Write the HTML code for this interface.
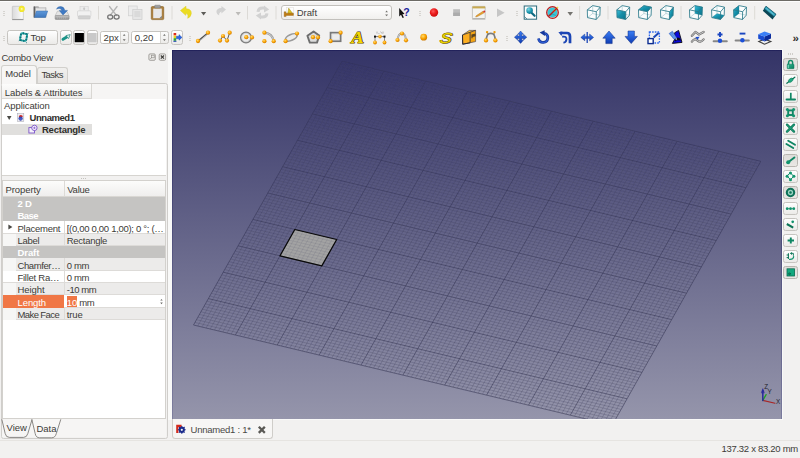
<!DOCTYPE html>
<html lang="en">
<head>
<meta charset="utf-8">
<title>FreeCAD</title>
<style>
html,body{margin:0;padding:0;}
body{width:800px;height:458px;overflow:hidden;background:#f2f1f0;position:relative;
 font-family:"Liberation Sans","DejaVu Sans",sans-serif;font-size:9.5px;letter-spacing:-0.08px;color:#3c3b37;line-height:1;}
.abs{position:absolute;}
.t{position:absolute;white-space:nowrap;line-height:12px;height:12px;}
.b{font-weight:bold;}
#topdark{left:0;top:0;width:800px;height:1px;background:#6d6b66;}
#topwhite{left:0;top:1px;width:800px;height:1.2px;background:#fdfdfd;}
.btn{position:absolute;box-sizing:border-box;border:1px solid #c6c4c0;border-radius:2.5px;
 background:linear-gradient(#fefefe,#ebeae8);}
.btn.on{background:linear-gradient(#dedcd9,#e9e7e4);border-color:#b9b6b1;}
.spin{position:absolute;box-sizing:border-box;border:1px solid #c6c4c0;border-radius:2.5px;background:linear-gradient(#fbfbfb,#ecebe9);}
.spin i{position:absolute;left:0;top:0;bottom:0;background:#fff;border-right:1px solid #d6d4d0;border-radius:2px 0 0 2px;}
.hdl{position:absolute;width:2px;height:1px;background:#d6d4d0;box-shadow:0 2px 0 #d6d4d0,0 4px 0 #d6d4d0;}
.sep{position:absolute;width:1px;background:#dad8d4;}
</style>
</head>
<body>
<div class="abs" id="topdark"></div><div class="abs" id="topwhite"></div>
<!-- toolbars -->
<div class="hdl" style="left:2.5px;top:10.5px"></div>
<div class="hdl" style="left:2.5px;top:35.5px"></div>
<div class="hdl" style="left:188.5px;top:35.5px"></div>
<div class="hdl" style="left:419px;top:10.5px"></div>
<div class="hdl" style="left:516px;top:10.5px"></div>
<div class="hdl" style="left:506.2px;top:35.5px"></div>
<!-- row 2 widgets -->
<div class="btn" style="left:7.3px;top:30.4px;width:50.6px;height:14.4px;"></div>
<div class="t" style="left:30.6px;top:31.5px;font-size:9.6px;">Top</div>
<div class="btn" style="left:60px;top:30.4px;width:11.8px;height:14.4px;"></div>
<div class="btn" style="left:73.4px;top:30.4px;width:11.6px;height:14.4px;"></div>
<div class="btn" style="left:86.6px;top:30.4px;width:11.4px;height:14.4px;"></div>
<div class="spin" style="left:100.4px;top:30.8px;width:29px;height:13.4px;"><i style="width:18.6px"></i></div>
<div class="t" style="left:103.4px;top:32px;font-size:9.6px;">2px</div>
<div class="spin" style="left:131px;top:30.8px;width:37.8px;height:13.4px;"><i style="width:28.4px"></i></div>
<div class="t" style="left:134.8px;top:32px;font-size:9.6px;">0,20</div>
<div class="btn" style="left:171px;top:30.4px;width:11.8px;height:14.4px;"></div>
<!-- workbench combo -->
<div class="abs" style="left:280.6px;top:5.4px;width:111.6px;height:14.4px;box-sizing:border-box;border:1px solid #c2c0bc;border-radius:3px;background:linear-gradient(#ffffff,#f1f0ee);"></div>
<svg class="abs" style="left:283px;top:6px" width="12" height="13" viewBox="283 6 12 13">
<rect x="286.6" y="7.4" width="6.8" height="9.6" fill="#fdfdfd" stroke="#dedcd8" stroke-width=".5"/>
<path d="M288.7 8.2L292.6 13.4H287.8Z" fill="#dcc424" stroke="#a08c14" stroke-width=".5" stroke-linejoin="round"/>
<path d="M284.2 11.8H285.8V13.2H293.4V15.4H285.8V16.6H284.2Z" fill="#c07c10" stroke="#8c580a" stroke-width=".4"/>
</svg>
<div class="t" style="left:296.8px;top:6.7px;font-size:9.5px;color:#3e3d3a;">Draft</div>
<svg class="abs" style="left:384px;top:9px" width="6" height="9" viewBox="384 9 6 9"><path d="M385.3 12.2L386.6 10.5L387.9 12.2ZM385.1 14.4L386.6 16.2L388.1 14.4Z" fill="#706f6b"/></svg>
<svg class="abs" style="left:0;top:0" width="800" height="50" viewBox="0 0 800 50">
<defs>
<linearGradient id="pg" x1="0" y1="0" x2="1" y2="0"><stop offset="0" stop-color="#dadada"/><stop offset="1" stop-color="#fdfdfd"/></linearGradient>
<radialGradient id="yel" cx=".5" cy=".5" r=".5"><stop offset="0" stop-color="#fffde0"/><stop offset=".45" stop-color="#f6ec38"/><stop offset="1" stop-color="#efe32a"/></radialGradient>
<linearGradient id="fold" x1="0" y1="0" x2="0" y2="1"><stop offset="0" stop-color="#5e98da"/><stop offset="1" stop-color="#3f78bf"/></linearGradient>
<linearGradient id="gr1" x1="0" y1="0" x2="0" y2="1"><stop offset="0" stop-color="#c8c8c8"/><stop offset="1" stop-color="#8e8e8e"/></linearGradient>
<radialGradient id="red" cx=".4" cy=".35" r=".7"><stop offset="0" stop-color="#ff5a5a"/><stop offset=".5" stop-color="#ea1c1c"/><stop offset="1" stop-color="#c80c0c"/></radialGradient>
<radialGradient id="tealb" cx=".35" cy=".3" r=".8"><stop offset="0" stop-color="#7ad8e6"/><stop offset=".6" stop-color="#1a94ac"/><stop offset="1" stop-color="#0a6c84"/></radialGradient>
<linearGradient id="tealf" x1="0" y1="0" x2="1" y2="1"><stop offset="0" stop-color="#3cbcd8"/><stop offset=".5" stop-color="#1490aa"/><stop offset="1" stop-color="#0a7088"/></linearGradient>
<radialGradient id="org" cx=".4" cy=".35" r=".7"><stop offset="0" stop-color="#ffdc70"/><stop offset=".55" stop-color="#f8a000"/><stop offset="1" stop-color="#c87400"/></radialGradient>
<linearGradient id="blu" x1="0" y1="0" x2="0" y2="1"><stop offset="0" stop-color="#3a7ef6"/><stop offset="1" stop-color="#0f3cb2"/></linearGradient>
<g id="cubew" stroke="#2c7a8a" stroke-width=".85" stroke-linejoin="round" fill="none">
 <path d="M5.7 5.6V13.5L.5 17.6M5.7 13.5L12.9 15.3" stroke-opacity=".45" stroke-width=".6"/>
 <path d="M.3 9.8L9.3 11.75L9.2 19.5L.5 17.6Z"/>
 <path d="M.3 9.8L5.7 5.6L13.2 7.1L9.3 11.75"/>
 <path d="M13.2 7.1L12.9 15.3L9.2 19.5"/>
</g>
<path id="cubebg" d="M.3 9.8L5.7 5.6L13.2 7.1L12.9 15.3L9.2 19.5L.5 17.6Z" fill="#fbfdfd"/>
</defs>
<!-- new -->
<rect x="12.3" y="6.3" width="11" height="13.1" rx=".6" fill="url(#pg)" stroke="#b9b9b9" stroke-width=".6"/>
<path d="M12.2 19.6H23.5" stroke="#8c8c8c" stroke-width=".9"/>
<circle cx="21.7" cy="8.9" r="3.1" fill="url(#yel)"/>
<!-- open -->
<path d="M33.7 6.4H38.4L39.4 7.4H46.2V17.4H33.7Z" fill="#8a8a8a"/>
<path d="M33.7 6.4H35V17.4H33.7Z" fill="#606060"/>
<path d="M35.6 7.6H45.6V16H35.6Z" fill="#e9e9e9"/><path d="M36.4 8.6H45" stroke="#c4c4c4" stroke-width=".6"/>
<path d="M36.4 11H47.7L45.5 17.4H34.4Z" fill="url(#fold)" stroke="#3a6eae" stroke-width=".5"/>
<!-- save -->
<path d="M57.4 11.2H66.8L69 15.6H55.2Z" fill="#e4e4e4" stroke="#a8a8a8" stroke-width=".5"/>
<rect x="55.1" y="15.5" width="14" height="3.9" rx=".7" fill="url(#gr1)" stroke="#868686" stroke-width=".5"/>
<path d="M57 18H67" stroke="#c8c8c8" stroke-width=".6" stroke-dasharray="1 1"/>
<path d="M56.5 9.2Q57.4 6.4 60.6 6.5Q64.2 6.7 64.8 10.4H67.5L63 15L59.2 10.4H61.8Q61.2 8.5 59.4 8.5Q57.6 8.4 56.5 9.2Z" fill="#3f7ac4" stroke="#2d609e" stroke-width=".4"/>
<!-- print (disabled) -->
<rect x="80" y="6.6" width="8.2" height="4.8" fill="#ececec" stroke="#d2d2d2" stroke-width=".6"/>
<path d="M82.8 8.4H85.4L84.1 10.2Z M83.7 7.2H84.5V8.6H83.7Z" fill="#bcbcbc"/>
<rect x="77.5" y="10.8" width="13.4" height="5.6" rx="1" fill="#f1f1f1" stroke="#cdcdcd" stroke-width=".6"/>
<rect x="78.2" y="15.8" width="12" height="3.2" rx=".8" fill="#d2d2d2" stroke="#c2c2c2" stroke-width=".5"/>
<line x1="98.5" y1="6" x2="98.5" y2="19.5" stroke="#dcdad6" stroke-width="1"/>
<!-- cut -->
<path d="M109.6 6.6L116.4 15.4M117 6.6L110.2 15.4" stroke="#b4b4b4" stroke-width="1.5" stroke-linecap="round"/>
<ellipse cx="110.2" cy="17" rx="2.5" ry="2.1" fill="none" stroke="#747474" stroke-width="1.3"/>
<ellipse cx="116.6" cy="17" rx="2.5" ry="2.1" fill="none" stroke="#747474" stroke-width="1.3"/>
<!-- copy (disabled) -->
<rect x="128.6" y="6" width="8.6" height="9.8" fill="#ececec" stroke="#d0d0d0" stroke-width=".7"/>
<rect x="132.8" y="9.4" width="9.2" height="10.2" fill="#e6e6e6" stroke="#cccccc" stroke-width=".7"/>
<rect x="134.4" y="11" width="6" height="6" fill="#dadada"/>
<!-- paste -->
<rect x="151.3" y="6.6" width="12.4" height="13" rx="1" fill="#ab8040" stroke="#8c6628" stroke-width=".7"/>
<rect x="153.2" y="8.6" width="8.6" height="9.6" fill="#e8e8e8"/>
<path d="M159.4 18.2L161.8 15.8V18.2Z" fill="#777"/>
<rect x="154.6" y="5.2" width="5.8" height="2.8" rx=".8" fill="#9e9e9e" stroke="#777" stroke-width=".5"/>
<line x1="172" y1="6" x2="172" y2="19.5" stroke="#dcdad6" stroke-width="1"/>
<!-- undo -->
<path d="M180.5 10.5L186 6.2V8.8Q191.5 9 191.3 13.5Q191 17 187.7 18.3Q189 15 185.9 13L185.7 15.3Z" fill="#ecdc22" stroke="#dccc1c" stroke-width=".5" stroke-linejoin="round"/>
<path d="M201 12H206.2L203.6 15.6Z" fill="#5c5b57"/>
<!-- redo (disabled) -->
<path d="M226 9.4L221.4 5.9V8Q216.4 8.3 216.4 12Q216.7 14.6 219.2 15.4Q218.6 13 221.4 11.6V13.4Z" fill="#d2d2d2"/>
<path d="M235.6 12H240.8L238.2 15.4Z" fill="#bcbbb8"/>
<line x1="247.5" y1="6" x2="247.5" y2="19.5" stroke="#dcdad6" stroke-width="1"/>
<!-- refresh (disabled) -->
<g fill="none" stroke="#d2d2d2" stroke-width="3">
<path d="M258 11.8Q258.4 8 262.4 8H265"/><path d="M267 13.4Q266.6 17 262.6 17H260"/>
</g>
<path d="M264 5.6L269.2 9.4L264 12.6Z M261 19.4L255.8 15.6L261 12.4Z" fill="#d2d2d2"/>
<line x1="276" y1="6" x2="276" y2="19.5" stroke="#dcdad6" stroke-width="1"/>
<!-- whatsthis -->
<path d="M399.2 8V16.4L401 14.8L402.6 18L403.9 17.4L402.4 14.2L404.6 13.9Z" fill="#111"/>
<text x="403.2" y="15.9" font-family="Liberation Sans, sans-serif" font-weight="bold" font-size="10.5" fill="#1c1c9c">?</text>
<!-- macro -->
<circle cx="434" cy="12.5" r="4.2" fill="url(#red)"/>
<rect x="453.2" y="9.2" width="6.8" height="6.8" fill="#bdbdbd"/><rect x="453.2" y="12.6" width="6.8" height="3.4" fill="#acacac"/>
<rect x="472.4" y="6.4" width="12.8" height="12.2" rx=".8" fill="#f4f4f1" stroke="#b2b2aa" stroke-width=".7"/>
<rect x="472.4" y="6.4" width="12.8" height="2" fill="#c9aa50"/>
<path d="M472.2 19H485.4" stroke="#9a9a94" stroke-width=".8"/>
<path d="M476.4 15.6L483 11.2L484.2 12.8L477.4 16.6L475.6 17Z" fill="#e8a22c" stroke="#a8701c" stroke-width=".4"/>
<path d="M483 11.2L484.4 10.2L485.4 11.8L484.2 12.8Z" fill="#d83030"/>
<path d="M497 8.4L504.6 12.7L497 17Z" fill="#c6c6c6"/>
<!-- zoom fit -->
<rect x="524.2" y="6" width="12.4" height="13.2" fill="#fcfcfc" stroke="#2c6c7c" stroke-width="1"/>
<path d="M532 13.2L534.6 15.8" stroke="#0c6880" stroke-width="2.2" stroke-linecap="round"/>
<circle cx="529.6" cy="10.6" r="3.3" fill="url(#tealb)"/><path d="M524.4 16.4L527 19" stroke="#2c6c7c" stroke-width=".7"/>
<!-- draw style -->
<circle cx="552.5" cy="12.5" r="5" fill="#3cc4d6"/><path d="M548.6 15.6Q552.5 13 556.4 15.6" stroke="#1a90a8" stroke-width=".6" fill="none"/>
<path d="M553 12L558 7" stroke="#f0e040" stroke-width="1.6"/>
<circle cx="552.5" cy="12.5" r="5.8" fill="none" stroke="#b81e1e" stroke-width="1.3"/>
<path d="M548.4 16.6L556.6 8.4" stroke="#b81e1e" stroke-width="1.4"/>
<path d="M567.5 12H573L570.2 15.7Z" fill="#74736f"/>
<line x1="579.6" y1="6" x2="579.6" y2="19.5" stroke="#dcdad6" stroke-width="1"/>
<!-- view cubes -->
<g transform="translate(587 0)"><use href="#cubebg"/><use href="#cubew"/></g>
<line x1="608" y1="6" x2="608" y2="19.5" stroke="#dcdad6" stroke-width="1"/>
<g transform="translate(616.5 0)"><use href="#cubebg"/><path d="M.3 9.8L9.3 11.75L9.2 19.5L.5 17.6Z" fill="url(#tealf)"/><use href="#cubew"/></g>
<g transform="translate(638.2 0)"><use href="#cubebg"/><path d="M.3 9.8L5.7 5.6L13.2 7.1L9.3 11.75Z" fill="url(#tealf)"/><use href="#cubew"/></g>
<g transform="translate(660.2 0)"><use href="#cubebg"/><path d="M9.3 11.75L13.2 7.1L12.9 15.3L9.2 19.5Z" fill="url(#tealf)"/><use href="#cubew"/></g>
<line x1="681" y1="6" x2="681" y2="19.5" stroke="#dcdad6" stroke-width="1"/>
<g transform="translate(689.2 0)"><use href="#cubebg"/><path d="M5.7 5.6L13.2 7.1L12.9 15.3L5.7 13.5Z" fill="url(#tealf)"/><use href="#cubew"/></g>
<g transform="translate(711.3 0)"><use href="#cubebg"/><path d="M.5 17.6L9.2 19.5L12.9 15.3L5.7 13.5Z" fill="url(#tealf)"/><use href="#cubew"/></g>
<g transform="translate(733.3 0)"><use href="#cubebg"/><path d="M.3 9.8L5.7 5.6V13.5L.5 17.6Z" fill="url(#tealf)"/><use href="#cubew"/></g>
<line x1="754.7" y1="6" x2="754.7" y2="19.5" stroke="#dcdad6" stroke-width="1"/>
<!-- measure -->
<path d="M766 6.2L776 14.2L772.6 19.4L762.8 10.8Z" fill="#0a4656"/>
<path d="M766 6.2L776 14.2L774.2 16.8L764.2 8.8Z" fill="#36a2ba" stroke="#0c4c5c" stroke-width=".6"/>
<path d="M766.4 8.4L773.6 14.4" stroke="#7ad0e0" stroke-width=".7"/>
<!-- ===== row 2 ===== -->
<!-- Top plane button icon -->
<g fill="none" transform="rotate(11 23.6 37.1)"><rect x="20.5" y="33.5" width="6.2" height="7.2" rx="1.6" stroke="#27a5a5" stroke-width="1.9"/><rect x="20.5" y="33.5" width="6.2" height="7.2" rx="1.6" stroke="#0a6a72" stroke-width="1.9" stroke-dasharray="1.1 1.8"/><path d="M19.6 41.6L21 40.2M26.2 34L27.6 32.6" stroke="#0c6c74" stroke-width=".9"/><circle cx="27.4" cy="42" r=".5" fill="#0c6c74"/></g>
<!-- link button icon -->
<path d="M63 39.3L66.8 37" stroke="#1a9488" stroke-width="3" stroke-linecap="round"/>
<path d="M66 35.6L70.2 34.6L68.6 38.6Z" fill="#e6f4f2" stroke="#1a8478" stroke-width=".7" stroke-linejoin="round"/>
<!-- swatches -->
<rect x="74.7" y="33" width="9.2" height="9.2" fill="#000"/>
<rect x="88" y="33" width="8.6" height="9.2" fill="#c9c9c9"/>
<!-- spin arrows -->
<path d="M122.9 35.8L124.2 34L125.5 35.8ZM122.7 39.2L124.2 41L125.7 39.2Z" fill="#6e6d69"/>
<path d="M163.1 35.8L164.4 34L165.7 35.8ZM162.9 39.2L164.4 41L165.9 39.2Z" fill="#6e6d69"/>
<!-- apply style button icon -->
<rect x="173.6" y="33" width="2.6" height="2.4" fill="#e02c1c"/><rect x="173.6" y="35.6" width="2.6" height="2.4" fill="#f0d020"/><rect x="173.6" y="38.2" width="2.6" height="2.6" fill="#28a838"/>
<rect x="173.4" y="40.8" width="3" height="1" fill="#1c3cb0"/>
<path d="M176.4 36.2H179V34.6L182 37.4L179 40.2V38.8H176.4Z" fill="#2c68e0" stroke="#1840a8" stroke-width=".4"/>
<!-- line -->
<path d="M198 41L208 32.7" stroke="#505050" stroke-width="1.3"/><path d="M198.7 41.8L208.7 33.5" stroke="#b4b4b4" stroke-width=".9"/>
<circle cx="198" cy="41" r="2.15" fill="url(#org)"/><circle cx="208" cy="32.7" r="2.15" fill="url(#org)"/>
<!-- wire -->
<path d="M220 40.6L223 36L227 40.6L229.7 32.7" stroke="#5a5a5a" stroke-width="1" fill="none"/>
<circle cx="220" cy="40.6" r="2.1" fill="url(#org)"/><circle cx="223" cy="36" r="2.1" fill="url(#org)"/><circle cx="227" cy="40.6" r="2.1" fill="url(#org)"/><circle cx="229.7" cy="32.7" r="2.1" fill="url(#org)"/>
<!-- circle -->
<circle cx="246" cy="37.5" r="5.3" fill="#ececec" stroke="#7e7e7e" stroke-width="1.5"/><circle cx="246" cy="37.5" r="4.3" fill="none" stroke="#d0d0d0" stroke-width=".7"/>
<circle cx="246.3" cy="37.2" r="2.1" fill="url(#org)"/><circle cx="252" cy="37.4" r="2.1" fill="url(#org)"/>
<!-- arc -->
<path d="M264.4 32.7Q272.6 33.6 273.7 41.2" stroke="#9c9c9c" stroke-width="2.2" fill="none"/><path d="M264.4 32.7Q272.6 33.6 273.7 41.2" stroke="#e0e0e0" stroke-width=".7" fill="none"/>
<circle cx="264.4" cy="32.7" r="2.1" fill="url(#org)"/><circle cx="264.4" cy="41.2" r="2.1" fill="url(#org)"/><circle cx="273.7" cy="41.2" r="2.1" fill="url(#org)"/>
<!-- ellipse -->
<ellipse cx="291.3" cy="37.4" rx="6.2" ry="2.9" transform="rotate(-24 291.3 37.4)" fill="#ededed" stroke="#9a9a9a" stroke-width="1.7"/>
<circle cx="285.6" cy="41.2" r="2.1" fill="url(#org)"/><circle cx="297" cy="33.5" r="2.1" fill="url(#org)"/>
<!-- polygon -->
<path d="M313.6 31.4L319.2 35.6L317 42.6H309.8L307.4 35.8Z" fill="#dcdcdc" stroke="#6e6e6e" stroke-width="1.9" stroke-linejoin="round"/>
<circle cx="313" cy="37.2" r="2.1" fill="url(#org)"/><circle cx="318" cy="37.4" r="2.1" fill="url(#org)"/>
<!-- rectangle -->
<rect x="330.6" y="32.7" width="10" height="8.5" fill="#ececec" stroke="#787878" stroke-width="1.8"/><rect x="331.9" y="34" width="7.4" height="5.9" fill="none" stroke="#d8d8d8" stroke-width=".6"/>
<circle cx="330.6" cy="41.2" r="2.1" fill="url(#org)"/><circle cx="340.6" cy="32.7" r="2.1" fill="url(#org)"/>
<!-- text -->
<text x="351.6" y="43.2" font-family="Liberation Serif, serif" font-weight="bold" font-style="italic" font-size="16" fill="#3a3000" stroke="#3a3000" stroke-width="1.1" textLength="12.4" lengthAdjust="spacingAndGlyphs">A</text>
<text x="351.2" y="42.8" font-family="Liberation Serif, serif" font-weight="bold" font-style="italic" font-size="16" fill="#f4d800" stroke="#f4d800" stroke-width=".25" textLength="12.4" lengthAdjust="spacingAndGlyphs">A</text>
<!-- dimension -->
<path d="M375 42.5V36.6M384.5 42.5V36.6" stroke="#8a8a8a" stroke-width="1"/><path d="M375 36.6H384.5" stroke="#555" stroke-width=".8"/>
<rect x="374" y="35.6" width="2" height="2" fill="#151515"/><rect x="383.5" y="35.6" width="2" height="2" fill="#151515"/>
<path d="M377 33.6V31.6M378.4 33.6H379.4M380.6 31.6L382 33.6M383 33.6V31.6" stroke="#8a8a8a" stroke-width=".6" fill="none"/>
<circle cx="375" cy="42.5" r="1.9" fill="url(#org)"/><circle cx="384.5" cy="42.5" r="1.9" fill="url(#org)"/><circle cx="380" cy="36.6" r="1.8" fill="url(#org)"/>
<!-- bspline -->
<path d="M397.5 40Q398.2 33.4 402 33.5Q405.6 33.6 406 40.3" stroke="#9a9a9a" stroke-width="1.8" fill="none"/><path d="M397.5 40Q398.2 33.4 402 33.5Q405.6 33.6 406 40.3" stroke="#e4e4e4" stroke-width=".6" fill="none"/>
<circle cx="397.5" cy="40" r="2.1" fill="url(#org)"/><circle cx="402" cy="33.5" r="2.1" fill="url(#org)"/><circle cx="406" cy="40.3" r="2.1" fill="url(#org)"/>
<!-- point -->
<circle cx="423.7" cy="37.2" r="3.4" fill="url(#org)"/>
<!-- shapestring -->
<g transform="translate(446 37.4) skewX(-10) translate(-446 -37.4)">
<text x="440.5" y="43" font-family="Liberation Sans, sans-serif" font-style="italic" font-size="14.4" fill="#332a00" stroke="#332a00" stroke-width="1.1" textLength="11.6" lengthAdjust="spacingAndGlyphs">S</text>
<text x="440.1" y="42.6" font-family="Liberation Sans, sans-serif" font-style="italic" font-size="14.4" fill="#ecd400" stroke="#ecd400" stroke-width=".35" textLength="11.6" lengthAdjust="spacingAndGlyphs">S</text>
</g>
<!-- facebinder -->
<path d="M462.5 35L469.3 30.4H475.6L470 32.4Z" fill="#fdc232" stroke="#3a3440" stroke-width=".6" stroke-linejoin="round"/>
<path d="M470 32.4L475.6 30.4V41.6L470 42.8Z" fill="#f4a412" stroke="#3a3440" stroke-width=".6" stroke-linejoin="round"/>
<path d="M471.4 34.4L475.6 33.4V36.2L472.6 37V38.2H471.4Z" fill="#5a4420"/>
<path d="M462.5 35L470 32.4V42.8L462.7 44.2Z" fill="#fcae20" stroke="#32303c" stroke-width=".7" stroke-linejoin="round"/>
<path d="M462.5 35L462.7 44.2L470 42.8" fill="none" stroke="#2c2a36" stroke-width="1"/>
<!-- bezier -->
<path d="M486 40.2C487 35 487.4 33.4 490.8 33.4C494.2 33.4 494.6 35 495.4 40.2" stroke="#7c7c7c" stroke-width="1.7" fill="none"/>
<path d="M487.1 32.1L487.6 34.6M494.5 32.1L494 34.6" stroke="#6a6a6a" stroke-width=".7"/>
<circle cx="486" cy="40.4" r="2.15" fill="url(#org)"/><circle cx="495.4" cy="40.4" r="2.15" fill="url(#org)"/><circle cx="487.1" cy="32.1" r="1.2" fill="#f09a00"/><circle cx="494.5" cy="32.1" r="1.2" fill="#f09a00"/>
<!-- move -->
<path d="M520.6 31L523.4 34.2H521.8V36H523.6V34.4L526.8 37.2L523.6 40V38.4H521.8V40.2H523.4L520.6 43.4L517.8 40.2H519.4V38.4H517.6V40L514.4 37.2L517.6 34.4V36H519.4V34.2H517.8Z" fill="url(#blu)" stroke="#0a2880" stroke-width=".4"/>
<!-- rotate -->
<path d="M544.2 33.2A4.7 4.7 0 1 1 538.5 38.6" stroke="#16389c" stroke-width="2.7" fill="none"/>
<path d="M544.2 33.2A4.7 4.7 0 1 1 538.5 38.6" stroke="#3060d8" stroke-width="1.1" fill="none"/>
<path d="M539.6 32.6L544.6 30.2L545 36Z" fill="#16389c"/>
<!-- offset -->
<path d="M560 33H567Q570 33 570 36.4V43.2" stroke="#1a44b4" stroke-width="2.7" fill="none"/>
<path d="M562.2 36.8Q566.8 35.8 566.4 39.6Q566 42.6 563.4 42.6" stroke="#1a44b4" stroke-width="1.9" fill="none"/>
<path d="M558.4 32.2L562.4 31.6L561.6 36Z" fill="#1a44b4"/>
<!-- trimex -->
<path d="M580.8 37.4L584.8 34V36.4H589.6V34L593.6 37.4L589.6 40.8V38.4H584.8V40.8Z" fill="url(#blu)" stroke="#0a2880" stroke-width=".4"/>
<path d="M587.2 32V43" stroke="#1a46b8" stroke-width="1.3"/>
<!-- upgrade -->
<path d="M609 31L615.2 38.2H612.2V43.6H605.8V38.2H602.8Z" fill="url(#blu)" stroke="#0a2880" stroke-width=".5"/>
<!-- downgrade -->
<path d="M631.2 43.6L625 36.4H628V31H634.4V36.4H637.4Z" fill="url(#blu)" stroke="#0a2880" stroke-width=".5"/>
<!-- scale -->
<rect x="649.4" y="32" width="10" height="11" fill="none" stroke="#2c68f0" stroke-width="1.3" stroke-dasharray="1.6 1.1"/>
<rect x="648" y="38.6" width="5.2" height="5" fill="#fff" stroke="#0c2c90" stroke-width="1.4"/>
<path d="M653.6 37.4L658.6 33" stroke="#1a46b8" stroke-width="2"/>
<!-- drawing -->
<path d="M674.6 32.8L678.6 30.4L682 42.4L672.4 43.4L675 38.6Z" fill="#0a0adc" stroke="#0c0c14" stroke-width=".9" stroke-linejoin="round"/>
<path d="M675.2 37.6L679.4 37.8L681 40.6L676.8 40.2L675 41.4Z" fill="#0c0c14"/>
<circle cx="676.3" cy="39" r=".8" fill="#f4f4f4"/>
<path d="M669.1 33.5L672.4 31.2L676.6 38L674 39.3Z" fill="#4c86e2" stroke="#2a58c0" stroke-width=".5"/>
<path d="M670.6 33L675.4 39M671.8 32.2L676.4 38.4" stroke="#8ab4f2" stroke-width=".5"/>
<!-- wire to bspline -->
<g fill="none" stroke-linecap="round" stroke-linejoin="round"><path d="M691.9 35.8L695.4 31.9L699 34.5L703.6 31.9" stroke="#747474" stroke-width="2.3"/><path d="M691.9 35.8L695.4 31.9L699 34.5L703.6 31.9" stroke="#dcdcdc" stroke-width=".8"/>
<path d="M691.9 41.6Q694.6 37.6 697.4 40.4Q700.4 43.4 703.6 39.4" stroke="#747474" stroke-width="2.3"/><path d="M691.9 41.6Q694.6 37.6 697.4 40.4Q700.4 43.4 703.6 39.4" stroke="#dcdcdc" stroke-width=".8"/></g>
<path d="M695.2 37L699.6 36.8L697.6 39.8Z" fill="#1c4cd0"/>
<!-- add point -->
<path d="M713.6 41.2H726.8" stroke="#868686" stroke-width="2" stroke-linecap="round"/><circle cx="720" cy="40.8" r="2.2" fill="#1c50d8"/>
<path d="M720 32V37M717.5 34.5H722.5" stroke="#1a46c0" stroke-width="1.9"/>
<!-- del point -->
<path d="M735.6 40.4H748.8" stroke="#868686" stroke-width="2" stroke-linecap="round"/><circle cx="742.4" cy="40.2" r="2.2" fill="#1c50d8"/>
<path d="M739.6 33.6H745.4" stroke="#1a46c0" stroke-width="1.9"/>
<!-- shape2dview -->
<path d="M758.8 41.6L764.6 44.2L770.8 41.6L764.6 39.2Z" fill="#f0f0f0" stroke="#3c3c3c" stroke-width="1.1"/>
<path d="M758.2 34.2L764.6 36.6V41.4L758.2 38.8Z" fill="#1a4cd0"/>
<path d="M764.6 36.6L771 33.8V38.4L764.6 41.4Z" fill="#0c2c9c"/>
<path d="M758.2 34.2L764.6 31.4L771 33.8L764.6 36.6Z" fill="#3c80f6"/>
<text x="792.4" y="41.8" font-family="Liberation Sans, sans-serif" font-weight="bold" font-size="11.5" fill="#34332f">»</text>

</svg>
<!-- Combo View dock -->
<div class="t" style="left:1.5px;top:52.3px;letter-spacing:-0.24px;">Combo View</div>
<svg class="abs" style="left:148px;top:53px" width="19" height="9" viewBox="0 0 19 9">
<rect x=".9" y=".9" width="6.4" height="6.4" rx="1.2" fill="#ecebe9" stroke="#8f8d88" stroke-width=".8"/>
<rect x="3.4" y="2.2" width="2.8" height="2.6" fill="none" stroke="#8a8883" stroke-width=".6"/><path d="M2.2 6L3.6 4.6" stroke="#8a8883" stroke-width=".7"/>
<rect x="11.2" y=".9" width="6.4" height="6.4" rx="1.2" fill="#ecebe9" stroke="#8f8d88" stroke-width=".8"/>
<path d="M12.8 2.5L16 5.7M16 2.5L12.8 5.7" stroke="#3e3d3a" stroke-width="1.2" fill="none"/>
</svg>
<!-- tab pane frame -->
<div class="abs" style="left:1px;top:82.9px;width:166.5px;height:355.7px;box-sizing:border-box;border:1.4px solid #d0cecb;border-radius:2.5px;background:#f2f1f0;"></div>
<!-- tabs -->
<div class="abs" style="left:36.5px;top:66.8px;width:31px;height:16.6px;box-sizing:border-box;border:1px solid #d2d0cc;border-bottom:none;border-radius:3px 3px 0 0;background:linear-gradient(#f1f0ee,#e6e4e1);"></div>
<div class="abs" style="left:1px;top:65px;width:35.5px;height:19.2px;box-sizing:border-box;border:1px solid #d2d0cc;border-bottom:none;border-radius:3px 3px 0 0;background:#f7f6f5;"></div>
<div class="t" style="left:5.2px;top:68px;">Model</div>
<div class="t" style="left:41.4px;top:68.6px;letter-spacing:-0.54px;">Tasks</div>
<!-- tree widget -->
<div class="abs" style="left:2px;top:84.4px;width:164px;height:92.1px;background:#fff;border-bottom:1px solid #d6d4d0;box-sizing:border-box;"></div>
<div class="abs" style="left:2px;top:84.4px;width:164px;height:14.8px;background:#f6f5f4;"></div>
<div class="abs" style="left:2px;top:84.4px;width:89.5px;height:14.8px;box-sizing:border-box;background:linear-gradient(#fcfcfb,#efeeed);border-right:1px solid #d9d7d3;border-bottom:1px solid #d9d7d3;"></div>
<div class="t" style="left:4.8px;top:86.7px;">Labels &amp; Attributes</div>
<div class="t" style="left:4px;top:100.3px;">Application</div>
<div class="abs" style="left:2px;top:123.6px;width:89.5px;height:11.4px;background:#e0dfdd;"></div>
<svg class="abs" style="left:6px;top:112px" width="36" height="24" viewBox="0 0 36 24">
<path d="M.9 3.9H5.5L3.2 7.9Z" fill="#4a4945"/>
<!-- document icon -->
<rect x="11.4" y="1.6" width="6.4" height="7.8" fill="#ececf2" stroke="#a4a4b0" stroke-width=".5"/>
<path d="M12.8 5A2 2 0 0 1 16.8 5Z" fill="#d42a22"/>
<circle cx="14.6" cy="6.6" r="2.1" fill="#2a3cb0"/><path d="M12.6 6.2H16.6M12.8 7.4H16.4" stroke="#8aa0e8" stroke-width=".4"/>
<!-- rectangle (Draft) icon -->
<rect x="22.9" y="15.6" width="5.6" height="5.4" fill="#f6f3fb" stroke="#7b52c8" stroke-width=".9"/>
<circle cx="28.4" cy="15.9" r="2.7" fill="#f6f2fc" stroke="#7b52c8" stroke-width=".9"/>
<path d="M27.2 15.9H29.6M28.4 14.7V17.1" stroke="#7b52c8" stroke-width=".7"/>
</svg>
<div class="t b" style="left:29.5px;top:112.2px;color:#2f2e2b;letter-spacing:-0.44px;">Unnamed1</div>
<div class="t b" style="left:42px;top:124.3px;color:#2f2e2b;letter-spacing:-0.24px;">Rectangle</div>
<!-- splitter dots -->
<div class="abs" style="left:81px;top:178px;width:5px;height:1px;background:repeating-linear-gradient(90deg,#c4c2be 0 1px,transparent 1px 2px);"></div>
<!-- property editor -->
<div class="abs" style="left:2px;top:180.40px;width:164px;height:238.6px;box-sizing:border-box;background:#fff;border:1px solid #d3d1cd;"></div>
<div class="abs" style="left:3px;top:181.40px;width:162px;height:15.2px;box-sizing:border-box;background:linear-gradient(#fcfcfb,#efeeed);border-bottom:1px solid #d9d7d3;"></div>
<div class="abs" style="left:64px;top:181.40px;width:1px;height:15px;background:#dcdad6;"></div>
<div class="t" style="left:5.5px;top:183.50px;">Property</div>
<div class="t" style="left:67.2px;top:183.50px;letter-spacing:-0.22px;">Value</div>
<div class="abs" style="left:3px;top:196.60px;width:162px;height:12.45px;background:#c5c4c2;"></div>
<div class="t b" style="left:17.5px;top:198.00px;color:#fff;letter-spacing:-0.15px;">2 D</div>
<div class="abs" style="left:3px;top:208.95px;width:162px;height:12.45px;background:#c5c4c2;"></div>
<div class="t b" style="left:17.5px;top:210.35px;color:#fff;letter-spacing:-0.60px;">Base</div>
<div class="abs" style="left:3px;top:221.30px;width:162px;height:12.45px;box-sizing:border-box;background:#ffffff;border-bottom:1px solid #dddbd8;"></div>
<div class="abs" style="left:64px;top:221.30px;width:1px;height:12.35px;background:#dddbd8;"></div>
<div class="t" style="left:17.5px;top:222.70px;letter-spacing:-0.25px;">Placement</div>
<div class="t" style="left:66.7px;top:222.70px;letter-spacing:-0.3px;">[(0,00 0,00 1,00); 0 °; (…</div>
<svg class="abs" style="left:8px;top:224.42px" width="5" height="6" viewBox="0 0 5 6"><path d="M.4 .4L4.4 3L.4 5.6Z" fill="#4a4945"/></svg>
<div class="abs" style="left:3px;top:233.65px;width:162px;height:12.45px;box-sizing:border-box;background:#ecebea;border-bottom:1px solid #dddbd8;"></div>
<div class="abs" style="left:3px;top:233.65px;width:12.5px;height:12.45px;background:#f6f6f5;"></div>
<div class="abs" style="left:64px;top:233.65px;width:1px;height:12.35px;background:#dddbd8;"></div>
<div class="t" style="left:17.5px;top:235.05px;letter-spacing:-0.28px;">Label</div>
<div class="t" style="left:66.7px;top:235.05px;letter-spacing:-0.26px;">Rectangle</div>
<div class="abs" style="left:3px;top:246.00px;width:162px;height:12.45px;background:#c5c4c2;"></div>
<div class="t b" style="left:17.5px;top:247.40px;color:#fff;">Draft</div>
<div class="abs" style="left:3px;top:258.35px;width:162px;height:12.45px;box-sizing:border-box;background:#ecebea;border-bottom:1px solid #dddbd8;"></div>
<div class="abs" style="left:3px;top:258.35px;width:12.5px;height:12.45px;background:#f6f6f5;"></div>
<div class="abs" style="left:64px;top:258.35px;width:1px;height:12.35px;background:#dddbd8;"></div>
<div class="t" style="left:17.5px;top:259.75px;letter-spacing:-0.40px;">Chamfer…</div>
<div class="t" style="left:66.7px;top:259.75px;letter-spacing:-0.30px;">0 mm</div>
<div class="abs" style="left:3px;top:270.70px;width:162px;height:12.45px;box-sizing:border-box;background:#ffffff;border-bottom:1px solid #dddbd8;"></div>
<div class="abs" style="left:64px;top:270.70px;width:1px;height:12.35px;background:#dddbd8;"></div>
<div class="t" style="left:17.5px;top:272.10px;letter-spacing:-0.27px;">Fillet Ra…</div>
<div class="t" style="left:66.7px;top:272.10px;letter-spacing:-0.30px;">0 mm</div>
<div class="abs" style="left:3px;top:283.05px;width:162px;height:12.45px;box-sizing:border-box;background:#ecebea;border-bottom:1px solid #dddbd8;"></div>
<div class="abs" style="left:3px;top:283.05px;width:12.5px;height:12.45px;background:#f6f6f5;"></div>
<div class="abs" style="left:64px;top:283.05px;width:1px;height:12.35px;background:#dddbd8;"></div>
<div class="t" style="left:17.5px;top:284.45px;">Height</div>
<div class="t" style="left:66.7px;top:284.45px;letter-spacing:-0.45px;">-10 mm</div>
<div class="abs" style="left:3px;top:295.40px;width:162px;height:12.45px;box-sizing:border-box;background:#ffffff;border-bottom:1px solid #dddbd8;"></div>
<div class="abs" style="left:3px;top:295.40px;width:61px;height:12.35px;background:#f07746;"></div>
<div class="abs" style="left:66.5px;top:296.40px;width:10.2px;height:10.35px;background:#f07746;"></div>
<div class="t" style="left:17.5px;top:296.80px;color:#fff;">Length</div>
<div class="t" style="left:66.7px;top:296.80px;"><span style="color:#fff">10</span><span style="letter-spacing:-0.4px"> mm</span></div>
<svg class="abs" style="left:158.5px;top:296.68px" width="5" height="9" viewBox="0 0 5 9"><path d="M1.3 3.5L2.5 2L3.7 3.5Z M1.2 5.6L2.5 7.2L3.8 5.6Z" fill="#6a6965"/></svg>
<div class="abs" style="left:3px;top:307.75px;width:162px;height:12.45px;box-sizing:border-box;background:#ecebea;border-bottom:1px solid #dddbd8;"></div>
<div class="abs" style="left:3px;top:307.75px;width:12.5px;height:12.45px;background:#f6f6f5;"></div>
<div class="abs" style="left:64px;top:307.75px;width:1px;height:12.35px;background:#dddbd8;"></div>
<div class="t" style="left:17.5px;top:309.15px;letter-spacing:-0.60px;">Make Face</div>
<div class="t" style="left:66.7px;top:309.15px;">true</div>
<div class="abs" style="left:2.4px;top:419.2px;width:163.6px;height:18.2px;background:#f6f5f4;"></div>
<svg class="abs" style="left:0;top:417px" width="70" height="24" viewBox="0 417 70 24">
<path d="M31.8 419.3L35.2 433.6Q36 437.8 39.6 437.8H51.6Q55.2 437.8 56.3 433.6L60.8 419.3" fill="#f8f7f6" stroke="#6e6c68" stroke-width=".8"/>
<path d="M1.8 419.3L5.2 433.6Q6 437.4 9.4 437.4H23.6Q26.8 437.4 27.8 433.6L32 419.6" fill="none" stroke="#6e6c68" stroke-width=".8"/>
</svg>
<div class="t" style="left:6.6px;top:422.30px;">View</div>
<div class="t" style="left:36.6px;top:422.80px;">Data</div>
<!-- 3D viewport -->
<div class="abs" style="left:168.3px;top:48.7px;width:614.4px;height:371px;background:#f9f9f8;"></div>
<div class="abs" id="view" style="left:171.5px;top:49.6px;width:610px;height:369.6px;background:linear-gradient(#1e1e58,#7a7a9c);overflow:hidden;">
<svg width="610" height="370" viewBox="0.5 0.4 610 370" style="position:absolute;left:0;top:0;display:block">
<defs><linearGradient id="bg" x1="0" y1="0" x2="0" y2="1"><stop offset="0" stop-color="#343467"/><stop offset="1" stop-color="#9595ab"/></linearGradient><linearGradient id="gmin" gradientUnits="userSpaceOnUse" x1="0" y1="0" x2="0" y2="370"><stop offset="0" stop-color="#323256" stop-opacity=".2"/><stop offset=".5" stop-color="#343454" stop-opacity=".3"/><stop offset="1" stop-color="#383854" stop-opacity=".32"/></linearGradient><linearGradient id="gmaj" gradientUnits="userSpaceOnUse" x1="0" y1="0" x2="0" y2="370"><stop offset="0" stop-color="#303058" stop-opacity=".5"/><stop offset=".5" stop-color="#343454" stop-opacity=".58"/><stop offset="1" stop-color="#383854" stop-opacity=".58"/></linearGradient><filter id="soft" x="0" y="0" width="1" height="1"><feGaussianBlur stdDeviation=".45"/></filter><filter id="soft2" x="0" y="0" width="1" height="1"><feGaussianBlur stdDeviation=".3"/></filter></defs>
<rect x="1.3" y="1.2" width="608.2" height="368.3" fill="url(#bg)"/>
<polygon points="123.3,179.9 165.2,189.9 150.3,216.3 108.5,206.2" fill="#a3a3a3"/>
<path d="M174.8 12.5L26.2 276.4M169.1 14.1L587.8 114.3M179.0 13.5L30.4 277.4M167.6 16.8L586.3 117.0M183.2 14.5L34.6 278.4M166.1 19.4L584.8 119.6M187.3 15.5L38.7 279.4M164.7 22.1L583.4 122.3M191.5 16.5L42.9 280.4M163.2 24.7L581.9 124.9M195.7 17.5L47.1 281.4M161.7 27.3L580.4 127.5M199.9 18.5L51.3 282.4M160.2 30.0L578.9 130.2M204.1 19.5L55.5 283.4M158.7 32.6L577.4 132.8M208.3 20.5L59.7 284.4M157.2 35.3L575.9 135.5M216.7 22.5L68.1 286.4M154.3 40.5L573.0 140.7M220.8 23.5L72.2 287.4M152.8 43.2L571.5 143.4M225.0 24.5L76.4 288.4M151.3 45.8L570.0 146.0M229.2 25.5L80.6 289.4M149.8 48.4L568.5 148.6M233.4 26.5L84.8 290.4M148.3 51.1L567.0 151.3M237.6 27.5L89.0 291.4M146.8 53.7L565.5 153.9M241.8 28.5L93.2 292.4M145.3 56.4L564.0 156.6M246.0 29.5L97.4 293.4M143.9 59.0L562.6 159.2M250.2 30.5L101.6 294.4M142.4 61.6L561.1 161.8M258.5 32.5L109.9 296.4M139.4 66.9L558.1 167.1M262.7 33.5L114.1 297.4M137.9 69.6L556.6 169.8M266.9 34.5L118.3 298.4M136.4 72.2L555.1 172.4M271.1 35.5L122.5 299.4M134.9 74.8L553.6 175.0M275.3 36.5L126.7 300.4M133.5 77.5L552.2 177.7M279.5 37.6L130.9 301.5M132.0 80.1L550.7 180.3M283.6 38.6L135.0 302.5M130.5 82.8L549.2 183.0M287.8 39.6L139.2 303.5M129.0 85.4L547.7 185.6M292.0 40.6L143.4 304.5M127.5 88.0L546.2 188.2M300.4 42.6L151.8 306.5M124.5 93.3L543.2 193.5M304.6 43.6L156.0 307.5M123.0 95.9L541.7 196.1M308.8 44.6L160.2 308.5M121.6 98.6L540.3 198.8M313.0 45.6L164.4 309.5M120.1 101.2L538.8 201.4M317.1 46.6L168.5 310.5M118.6 103.9L537.3 204.1M321.3 47.6L172.7 311.5M117.1 106.5L535.8 206.7M325.5 48.6L176.9 312.5M115.6 109.1L534.3 209.3M329.7 49.6L181.1 313.5M114.1 111.8L532.8 212.0M333.9 50.6L185.3 314.5M112.6 114.4L531.3 214.6M342.3 52.6L193.7 316.5M109.7 119.7L528.4 219.9M346.5 53.6L197.9 317.5M108.2 122.3L526.9 222.5M350.6 54.6L202.0 318.5M106.7 125.0L525.4 225.2M354.8 55.6L206.2 319.5M105.2 127.6L523.9 227.8M359.0 56.6L210.4 320.5M103.7 130.3L522.4 230.5M363.2 57.6L214.6 321.5M102.2 132.9L520.9 233.1M367.4 58.6L218.8 322.5M100.8 135.5L519.5 235.7M371.6 59.6L223.0 323.5M99.3 138.2L518.0 238.4M375.8 60.6L227.2 324.5M97.8 140.8L516.5 241.0M384.1 62.6L235.5 326.5M94.8 146.1L513.5 246.3M388.3 63.6L239.7 327.5M93.3 148.7L512.0 248.9M392.5 64.6L243.9 328.5M91.8 151.4L510.5 251.6M396.7 65.6L248.1 329.5M90.4 154.0L509.1 254.2M400.9 66.6L252.3 330.5M88.9 156.6L507.6 256.8M405.1 67.6L256.5 331.5M87.4 159.3L506.1 259.5M409.3 68.6L260.7 332.5M85.9 161.9L504.6 262.1M413.4 69.6L264.8 333.5M84.4 164.6L503.1 264.8M417.6 70.6L269.0 334.5M82.9 167.2L501.6 267.4M426.0 72.6L277.4 336.5M80.0 172.5L498.7 272.7M430.2 73.6L281.6 337.5M78.5 175.1L497.2 275.3M434.4 74.6L285.8 338.5M77.0 177.8L495.7 278.0M438.6 75.6L290.0 339.5M75.5 180.4L494.2 280.6M442.8 76.6L294.2 340.5M74.0 183.0L492.7 283.2M446.9 77.6L298.3 341.5M72.5 185.7L491.2 285.9M451.1 78.6L302.5 342.5M71.0 188.3L489.7 288.5M455.3 79.6L306.7 343.5M69.6 191.0L488.3 291.2M459.5 80.6L310.9 344.5M68.1 193.6L486.8 293.8M467.9 82.6L319.3 346.5M65.1 198.9L483.8 299.1M472.1 83.6L323.5 347.5M63.6 201.5L482.3 301.7M476.3 84.6L327.7 348.5M62.1 204.1L480.8 304.3M480.4 85.6L331.8 349.5M60.6 206.8L479.3 307.0M484.6 86.7L336.0 350.5M59.2 209.4L477.9 309.6M488.8 87.7L340.2 351.6M57.7 212.1L476.4 312.3M493.0 88.7L344.4 352.6M56.2 214.7L474.9 314.9M497.2 89.7L348.6 353.6M54.7 217.3L473.4 317.5M501.4 90.7L352.8 354.6M53.2 220.0L471.9 320.2M509.7 92.7L361.1 356.6M50.2 225.3L468.9 325.5M513.9 93.7L365.3 357.6M48.7 227.9L467.4 328.1M518.1 94.7L369.5 358.6M47.3 230.5L466.0 330.7M522.3 95.7L373.7 359.6M45.8 233.2L464.5 333.4M526.5 96.7L377.9 360.6M44.3 235.8L463.0 336.0M530.7 97.7L382.1 361.6M42.8 238.5L461.5 338.7M534.9 98.7L386.3 362.6M41.3 241.1L460.0 341.3M539.1 99.7L390.5 363.6M39.8 243.7L458.5 343.9M543.2 100.7L394.6 364.6M38.3 246.4L457.0 346.6M551.6 102.7L403.0 366.6M35.4 251.6L454.1 351.8M555.8 103.7L407.2 367.6M33.9 254.3L452.6 354.5M560.0 104.7L411.4 368.6M32.4 256.9L451.1 357.1M564.2 105.7L415.6 369.6M30.9 259.6L449.6 359.8M568.4 106.7L419.8 370.6M29.4 262.2L448.1 362.4M572.6 107.7L424.0 371.6M27.9 264.8L446.6 365.0M576.7 108.7L428.1 372.6M26.5 267.5L445.2 367.7M580.9 109.7L432.3 373.6M25.0 270.1L443.7 370.3M585.1 110.7L436.5 374.6M23.5 272.8L442.2 373.0" stroke="url(#gmin)" stroke-width=".8" fill="none" filter="url(#soft)"/>
<path d="M170.6 11.5L22.0 275.4M170.6 11.5L589.3 111.7M212.5 21.5L63.9 285.4M155.7 37.9L574.4 138.1M254.3 31.5L105.7 295.4M140.9 64.3L559.6 164.5M296.2 41.6L147.6 305.5M126.0 90.7L544.7 190.9M338.1 51.6L189.5 315.5M111.2 117.1L529.9 217.3M380.0 61.6L231.4 325.5M96.3 143.4L515.0 243.6M421.8 71.6L273.2 335.5M81.4 169.8L500.1 270.0M463.7 81.6L315.1 345.5M66.6 196.2L485.3 296.4M505.6 91.7L357.0 355.6M51.7 222.6L470.4 322.8M547.4 101.7L398.8 365.6M36.9 249.0L455.6 349.2M589.3 111.7L440.7 375.6M22.0 275.4L440.7 375.6" stroke="url(#gmaj)" stroke-width="1" fill="none" filter="url(#soft2)"/>
<polygon points="123.3,179.9 165.2,189.9 150.3,216.3 108.5,206.2" fill="#a3a3a3" fill-opacity=".5" stroke="#0a0a0a" stroke-width="1.25" stroke-linejoin="round"/>
<!-- axis cross -->
<g fill="none" stroke-linecap="round">
<path d="M591.3 350.8L603.5 353.6" stroke="#a82626" stroke-width="1.1"/>
<path d="M591.3 350.8L594.6 345" stroke="#22a022" stroke-width="1.3"/>
<path d="M591.3 350.8L591.3 341" stroke="#2a2a9c" stroke-width="1.5"/>
<path d="M589.9 343L591.3 339L592.7 343Z" fill="#2a2a9c" stroke="#2a2a9c" stroke-width=".5"/>
</g>
<g font-family="Liberation Sans, sans-serif" font-size="6.3" fill="#1c1c2c">
<text x="604.6" y="354.8">X</text><text x="596" y="344.9">Y</text><text x="592.8" y="339.6">Z</text>
</g>
</svg>
</div>
<!-- right snap toolbar -->
<div class="abs" style="left:788px;top:53px;width:5px;height:2px;background:repeating-linear-gradient(90deg,#cfcdc9 0 1px,transparent 1px 2px);"></div>
<div class="btn on" style="left:783.3px;top:57.5px;width:14.4px;height:13.6px;"></div>
<div class="btn" style="left:783.3px;top:73.5px;width:14.4px;height:13.6px;"></div>
<div class="btn" style="left:783.3px;top:89.5px;width:14.4px;height:13.6px;"></div>
<div class="btn on" style="left:783.3px;top:105.5px;width:14.4px;height:13.6px;"></div>
<div class="btn" style="left:783.3px;top:121.5px;width:14.4px;height:13.6px;"></div>
<div class="btn" style="left:783.3px;top:137.5px;width:14.4px;height:13.6px;"></div>
<div class="btn on" style="left:783.3px;top:153.5px;width:14.4px;height:13.6px;"></div>
<div class="btn" style="left:783.3px;top:169.5px;width:14.4px;height:13.6px;"></div>
<div class="btn on" style="left:783.3px;top:185.5px;width:14.4px;height:13.6px;"></div>
<div class="btn" style="left:783.3px;top:201.5px;width:14.4px;height:13.6px;"></div>
<div class="btn" style="left:783.3px;top:217.5px;width:14.4px;height:13.6px;"></div>
<div class="btn" style="left:783.3px;top:233.5px;width:14.4px;height:13.6px;"></div>
<div class="btn" style="left:783.3px;top:249.5px;width:14.4px;height:13.6px;"></div>
<div class="btn on" style="left:783.3px;top:265.5px;width:14.4px;height:13.6px;"></div>
<svg class="abs" style="left:782px;top:56px" width="18" height="226" viewBox="782 56 18 226">
<defs><linearGradient id="grn" x1="0" y1="0" x2="1" y2="1"><stop offset="0" stop-color="#2cb892"/><stop offset="1" stop-color="#0c7c5c"/></linearGradient></defs>
<g stroke="#0f8664" fill="none" stroke-linecap="round">
<!-- 0 lock -->
<path d="M788.6 64.6V62.6A2 2.2 0 0 1 792.6 62.6V64.6" stroke-width="1.5" stroke="#128c68"/>
<rect x="787.2" y="64.2" width="6.8" height="4.5" rx=".6" fill="url(#grn)" stroke="#0c7456" stroke-width=".5"/>
<path d="M788.4 65.2V67.8" stroke="#8ee0c6" stroke-width=".8"/>
<!-- 1 endpoint -->
<path d="M786.8 83.2L794.8 77.2" stroke-width="1.3" stroke="#0c7456"/>
<ellipse cx="790.8" cy="80.2" rx="2.7" ry="1.7" transform="rotate(-37 790.8 80.2)" fill="#1eaa82" stroke="#0c7456" stroke-width=".5"/>
<!-- 2 perpendicular -->
<path d="M790.8 92.8V99" stroke-width="1.7" stroke-linecap="butt"/><path d="M786.6 99.6H795" stroke-width="2"/>
<!-- 3 grid -->
<rect x="788.2" y="110.4" width="4.6" height="4.6" stroke-width="1.9"/>
<g fill="#12946e" stroke="none"><circle cx="787.4" cy="109.6" r="1.5"/><circle cx="793.6" cy="109.6" r="1.5"/><circle cx="787.4" cy="115.8" r="1.5"/><circle cx="793.6" cy="115.8" r="1.5"/></g>
<!-- 4 intersection -->
<path d="M787 124.6L794 131.6M794 124.6L787 131.6" stroke-width="2.3" stroke="#0c7456"/><path d="M787 124.6L794 131.6M794 124.6L787 131.6" stroke-width="1" stroke="#22ae86"/>
<!-- 5 parallel -->
<path d="M788.2 140.8L795 144.8M786.4 144L793.2 148" stroke-width="1.9"/>
<!-- 6 midpoint -->
<path d="M787.6 162.8L794.4 157.4" stroke-width="1.9"/><circle cx="788.2" cy="162.2" r="2" fill="#12946e" stroke="none"/>
<!-- 7 angle -->
<path d="M790.5 173L793.8 176.3L790.5 179.6L787.2 176.3Z" stroke-width="1" fill="#f4fbf8"/>
<g fill="#12946e" stroke="none"><circle cx="790.5" cy="172.9" r="1.5"/><circle cx="793.9" cy="176.3" r="1.5"/><circle cx="790.5" cy="179.7" r="1.5"/><circle cx="787.1" cy="176.3" r="1.5"/></g>
<!-- 8 center -->
<circle cx="790.5" cy="192.5" r="3.7" stroke-width="2.1" stroke="#0c7258" fill="#9ad2c0"/><circle cx="790.5" cy="192.5" r="1.2" fill="#0c7258" stroke="none"/>
<!-- 9 extension -->
<path d="M787 208.7H794" stroke-width=".8"/>
<g fill="#12946e" stroke="none"><circle cx="787.2" cy="208.7" r="1.35"/><circle cx="790.5" cy="208.7" r="1.35"/><circle cx="793.8" cy="208.7" r="1.35"/></g>
<!-- 10 near -->
<path d="M786.8 224L793.2 227.6" stroke-width="2.1" stroke="#0c7456" stroke-linecap="butt"/><circle cx="792.7" cy="221.8" r="1.35" fill="#12946e" stroke="none"/>
<!-- 11 ortho -->
<path d="M790.8 237.4V243.6M787.6 240.5H794" stroke-width="1.9" stroke-linecap="butt"/>
<!-- 12 dimensions -->
<path d="M788.4 253.6V258.6M788.4 255H787M788.4 257.6H787" stroke-width="1" stroke="#0c7456"/>
<path d="M790.4 253.4H793.4V255.4M791.6 252.6V254.4" stroke-width=".9" stroke="#0c7456"/>
<path d="M789.6 259.4Q793.6 259.6 793.6 256.6" stroke-width="1.3" stroke="#12946e"/>
<!-- 13 working plane -->
<rect x="787" y="268.8" width="7.6" height="7.2" fill="#12a87e" stroke="#0c6c52" stroke-width=".8"/>
<circle cx="789.4" cy="273.8" r=".9" stroke="#0a4c3a" stroke-width=".6"/>
</g>
</svg>
<!-- MDI tab -->
<div class="abs" style="left:172px;top:419px;width:100.5px;height:20.3px;box-sizing:border-box;background:#f7f6f5;border:1px solid #cfcdc9;border-top:none;border-radius:0 0 3.5px 3.5px;"></div>
<svg class="abs" style="left:175px;top:423px" width="12" height="12" viewBox="0 0 12 12">
<path d="M1.2 1.8H6.6V4H3.4V10H1.2Z" fill="#d42a1c"/>
<circle cx="6.8" cy="6.8" r="3.1" fill="#1c2c8c"/><circle cx="6.8" cy="6.8" r="1.1" fill="#f7f6f5"/>
<path d="M6.8 2.9V10.7M2.9 6.8H10.7M4 4L9.6 9.6M9.6 4L4 9.6" stroke="#1c2c8c" stroke-width="1.1"/>
<circle cx="6.8" cy="6.8" r="1.1" fill="#f7f6f5"/>
</svg>
<div class="t" style="left:190.6px;top:423.6px;color:#4a4945;letter-spacing:-0.25px;">Unnamed1 : 1*</div>
<svg class="abs" style="left:256.5px;top:425px" width="10" height="10" viewBox="0 0 10 10"><path d="M2.6 2.6L7 7M7 2.6L2.6 7" stroke="#5a5955" stroke-width="2.3" stroke-linecap="square"/></svg>
<!-- status bar -->
<div class="abs" style="left:0;top:439.6px;width:800px;height:1px;background:#e6e4e1;"></div>
<div class="t" style="right:2px;top:443.4px;letter-spacing:-0.28px;">137.32 x 83.20 mm</div>
</body>
</html>
